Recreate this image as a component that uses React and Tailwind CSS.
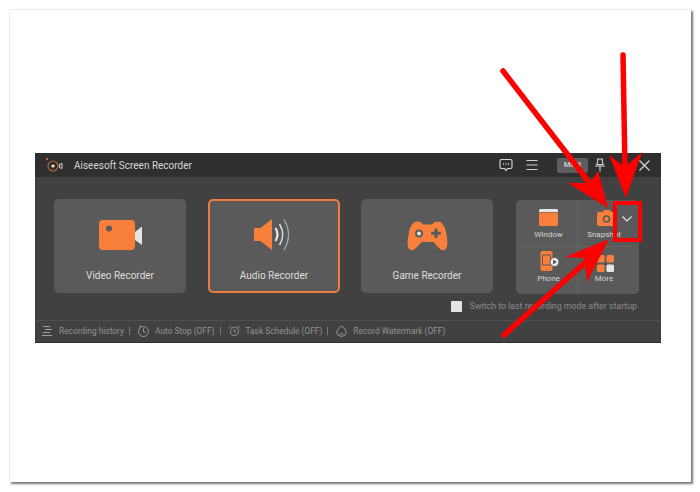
const font = { fontFamily: 'Roboto, "Noto Sans", sans-serif' };

function FooterItem({ icon, label, divider }) {
    return (
        <div className="flex items-center">
            <span className="w-[11px] h-[12px] flex items-center justify-center">{icon}</span>
            <span className="ml-[6px] whitespace-nowrap">{label}</span>
            {divider && <span className="ml-[5px] w-px h-[8px] bg-[#777777]"></span>}
        </div>
    );
}

function BigCard({ label, active, children }) {
    return (
        <div className={`w-[132px] h-[94px] rounded-[5px] bg-[#5a5a5a] flex flex-col items-center ${active ? "border-2 border-[#ee7c3e]" : ""}`}>
            <div className={`w-full flex items-end justify-center ${active ? "h-[50px]" : "h-[52px]"}`}>{children}</div>
            <div className="mt-[18px] text-[10px] leading-[14px] text-[#dedede]">{label}</div>
        </div>
    );
}

function SmallCell({ label, className, iconClass, children }) {
    return (
        <div className={`flex flex-col items-center ${className}`}>
            <div className={`flex items-end justify-center ${iconClass}`}>{children}</div>
            <div className="text-[8px] leading-[11px] text-[#d4d4d4]">{label}</div>
        </div>
    );
}

export default function App() {
    return (
        <div className="relative w-[700px] h-[492px] bg-white overflow-hidden" style={font}>
            <div className="ml-[9px] pt-[9px]">
                <div className="w-[682px] h-[473px] bg-white pt-[143px] pl-[25px] border-t border-l border-[#ececec] shadow-[2px_2px_2px_rgba(0,0,0,0.55)]">
                    <div className="w-[626px] h-[190px] bg-[#414141] flex flex-col border-b border-[#2c2c2c]">
                        {/* title bar */}
                        <div className="h-[24px] bg-[#2f2f2f] flex items-center shrink-0">
                            <svg width="20" height="16" viewBox="0 0 20 16" className="ml-[10px]">
                                <circle cx="2" cy="2" r="1" fill="#f58140" />
                                <circle cx="8" cy="9" r="5" fill="none" stroke="#b9623a" strokeWidth="1.2" />
                                <circle cx="8" cy="9" r="1.6" fill="#eeeeee" />
                                <path d="M14.5 7.5 L17 6.5 V11.5 L14.5 10.5Z" fill="none" stroke="#dddddd" strokeWidth="1" />
                            </svg>
                            <span className="ml-[9px] mt-[1px] text-[10px] text-[#d6d6d6]">Aiseesoft Screen Recorder</span>
                            <div className="ml-auto flex items-center">
                                <svg width="14" height="14" viewBox="0 0 14 14" fill="none" stroke="#d8d8d8" strokeWidth="1.1">
                                    <path d="M2.5 1.5H11.5Q13 1.5 13 3V9Q13 10.5 11.5 10.5H8.5L7 12.5L5.5 10.5H2.5Q1 10.5 1 9V3Q1 1.5 2.5 1.5Z" />
                                    <path d="M4 6H5M6.5 6H7.5M9 6H10" strokeWidth="1.3" />
                                </svg>
                                <svg width="12" height="12" viewBox="0 0 12 12" stroke="#d0d0d0" strokeWidth="1.1" className="ml-[13px]">
                                    <path d="M0.5 1.5H11.5M0.5 6H11.5M0.5 10.5H11.5" />
                                </svg>
                                <div className="ml-[19px] w-[31px] h-[15px] rounded-[2px] bg-[#5d5d5d] flex items-center justify-center text-[8px] font-bold text-[#c9c9c9]">MINI</div>
                                <svg width="12" height="14" viewBox="0 0 12 14" fill="none" stroke="#d8d8d8" strokeWidth="1.1" className="ml-[6px]">
                                    <path d="M3 1H9M4 1.5L3 6.5H9L8 1.5M1 8H11M6 8V13.5" />
                                </svg>
                                <svg width="11" height="11" viewBox="0 0 11 11" stroke="#dddddd" strokeWidth="1.1" className="ml-[33px] mr-[11px]">
                                    <path d="M0.5 0.5L10.5 10.5M10.5 0.5L0.5 10.5" />
                                </svg>
                            </div>
                        </div>

                        {/* mode cards */}
                        <div className="flex pl-[19px] pt-[22px]">
                            <BigCard label="Video Recorder">
                                <svg width="44" height="31" viewBox="0 0 44 31" className="ml-[1px]">
                                    <rect x="0" y="0" width="36" height="30" rx="4" fill="#f9803a" />
                                    <circle cx="10" cy="8.5" r="3" fill="#5a5a5a" />
                                    <path d="M36 12L43 6.5V25L36 20Z" fill="#e6e6e6" />
                                </svg>
                            </BigCard>
                            <div className="ml-[22px]">
                                <BigCard label="Audio Recorder" active>
                                    <svg width="40" height="33" viewBox="0 0 40 33" fill="none">
                                        <path d="M0 10H6.5L18 1V32L6.5 23H0Z" fill="#f9803a" />
                                        <path d="M21.5 10Q25.5 16.5 21.5 23" stroke="#eeeeee" strokeWidth="2" />
                                        <path d="M25.5 6Q32 16.5 25.5 27" stroke="#d6d6d6" strokeWidth="1.6" />
                                        <path d="M30 1.5Q39 16.5 30 32" stroke="#a8a8a8" strokeWidth="1.3" />
                                    </svg>
                                </BigCard>
                            </div>
                            <div className="ml-[21px]">
                                <BigCard label="Game Recorder">
                                    <svg width="41" height="30" viewBox="0 0 41 30">
                                        <path d="M10 0.5Q14 0.5 16 3.5H25Q27 0.5 31 0.5Q37 1 39 11Q41.5 23 39.5 27Q37 31 33 28Q29 24 26.5 21H14.5Q12 24 8 28Q4 31 1.5 27Q-0.5 23 2 11Q4 1 10 0.5Z" fill="#f9803a" />
                                        <circle cx="12" cy="12.5" r="4" fill="#5a5a5a" />
                                        <circle cx="12" cy="12.5" r="2" fill="#e6e6e6" />
                                        <path d="M29 7.5V17M24.2 12.2H33.8" stroke="#5a5a5a" strokeWidth="3" />
                                    </svg>
                                </BigCard>
                            </div>

                            {/* small tools */}
                            <div className="ml-[23px] mt-px w-[123px] h-[94px] rounded-[5px] bg-[#5a5a5a] flex">
                                <div className="w-[62px] flex flex-col">
                                    <SmallCell label="Window" className="h-[47px] pl-[4px] border-r border-b border-[#666666]" iconClass="h-[26px] mb-[3px]">
                                        <svg width="19" height="17" viewBox="0 0 19 17">
                                            <path d="M1.5 0H17.5Q19 0 19 1.5V3H0V1.5Q0 0 1.5 0Z" fill="#e6e6e6" />
                                            <path d="M0 3.5H19V15.5Q19 17 17.5 17H1.5Q0 17 0 15.5Z" fill="#f9803a" />
                                        </svg>
                                    </SmallCell>
                                    <SmallCell label="Phone" className="h-[47px] pl-[4px] border-r border-[#666666]" iconClass="h-[25px] mb-[1px] pl-[3px]">
                                        <svg width="20" height="21" viewBox="0 0 20 21">
                                            <rect x="0.5" y="0" width="12" height="20" rx="2" fill="#f9803a" />
                                            <rect x="2.5" y="4" width="8" height="10" fill="none" stroke="#5a5a5a" strokeWidth="1" />
                                            <circle cx="14.5" cy="11" r="4.5" fill="#eeeeee" stroke="#5a5a5a" />
                                            <path d="M13 8.5L17 11L13 13.5Z" fill="#5a5a5a" />
                                        </svg>
                                    </SmallCell>
                                </div>
                                <div className="w-[52px] flex flex-col">
                                    <SmallCell label="Snapshot" className="h-[47px] border-b border-[#666666]" iconClass="h-[26px] mb-[3px] pl-[4px]">
                                        <svg width="19" height="16" viewBox="0 0 19 16">
                                            <path d="M2 2H6L7 0H13L14 2H17Q19 2 19 4V14Q19 16 17 16H2Q0 16 0 14V4Q0 2 2 2Z" fill="#f9803a" />
                                            <circle cx="9.5" cy="9" r="3" fill="none" stroke="#5a5a5a" strokeWidth="1.6" />
                                        </svg>
                                    </SmallCell>
                                    <SmallCell label="More" className="h-[47px]" iconClass="h-[25px] mb-[1px] pl-[3px]">
                                        <svg width="17" height="17" viewBox="0 0 17 17">
                                            <rect x="0" y="0" width="7.6" height="7.6" rx="1.5" fill="#f9803a" />
                                            <rect x="9.4" y="0" width="7.6" height="7.6" rx="1.5" fill="#f9803a" />
                                            <rect x="0" y="9.4" width="7.6" height="7.6" rx="1.5" fill="#f9803a" />
                                            <rect x="9.4" y="9.4" width="7.6" height="7.6" rx="1.5" fill="#e6e6e6" />
                                        </svg>
                                    </SmallCell>
                                </div>
                                <div className="w-[10px] -ml-[8px] pt-[16px]">
                                    <svg width="10" height="6" viewBox="0 0 10 6" fill="none" stroke="#e6e6e6" strokeWidth="1.2">
                                        <path d="M0.5 0.5L5 5L9.5 0.5" />
                                    </svg>
                                </div>
                            </div>
                        </div>

                        {/* startup option */}
                        <div className="flex items-center justify-end pr-[24px] mt-[6px] h-[13px]">
                            <span className="w-[11px] h-[11px] rounded-[1px] bg-[#e3e3e3]"></span>
                            <span className="ml-[8px] text-[8.8px] text-[#8c8c8c]">Switch to last recording mode after startup</span>
                        </div>

                        {/* footer */}
                        <div className="mt-auto h-[22px] border-t border-[#4f4f4f] flex items-center gap-[8px] pl-[7px] text-[8.4px] text-[#939393]">
                            <FooterItem label="Recording history" divider icon={
                                <svg width="11" height="10" viewBox="0 0 11 10" stroke="#a0a0a0" strokeWidth="1"><path d="M1 .5H8M3 3.5H10M1 6.5H8M0 9.5H10" /></svg>
                            } />
                            <FooterItem label="Auto Stop (OFF)" divider icon={
                                <svg width="11" height="12" viewBox="0 0 11 12" fill="none" stroke="#a0a0a0" strokeWidth="0.9"><circle cx="5.5" cy="6.5" r="5" /><path d="M5.5 3.5V7H8M1 2L3 .5" /></svg>
                            } />
                            <FooterItem label="Task Schedule (OFF)" divider icon={
                                <svg width="12" height="12" viewBox="0 0 12 12" fill="none" stroke="#a0a0a0" strokeWidth="0.9"><circle cx="6" cy="6.5" r="4.5" /><path d="M6 4V7H8M.5 3L2.5 .5M11.5 3L9.5 .5" /></svg>
                            } />
                            <FooterItem label="Record Watermark (OFF)" icon={
                                <svg width="11" height="12" viewBox="0 0 11 12" fill="none" stroke="#a0a0a0" strokeWidth="0.9"><path d="M5.5 .5L9.5 5Q11.5 8 9 10.3Q5.5 12.5 2 10.3Q-.5 8 1.5 5Z" /><path d="M3.5 8.5Q5.5 10 7.5 8.5" /></svg>
                            } />
                        </div>
                    </div>
                </div>
            </div>

            {/* red annotation arrows */}
            <svg width="700" height="492" viewBox="0 0 700 492" className="absolute left-0 top-0">
                <rect x="615" y="203" width="25" height="37" fill="none" stroke="#ff0000" strokeWidth="4" />
                <path d="M503 71L592 186" stroke="#ff0000" strokeWidth="5.5" strokeLinecap="round" />
                <path d="M608 208L568 183L590 183L598 171Z" fill="#ff0000" />
                <path d="M623 55L625 170" stroke="#ff0000" strokeWidth="5.5" strokeLinecap="round" />
                <path d="M626 198L609 155L625 167L642 152Z" fill="#ff0000" />
                <path d="M504 335L588 260" stroke="#ff0000" strokeWidth="5.5" strokeLinecap="round" />
                <path d="M609 239L565 257L584 258L587 282Z" fill="#ff0000" />
            </svg>
        </div>
    );
}
